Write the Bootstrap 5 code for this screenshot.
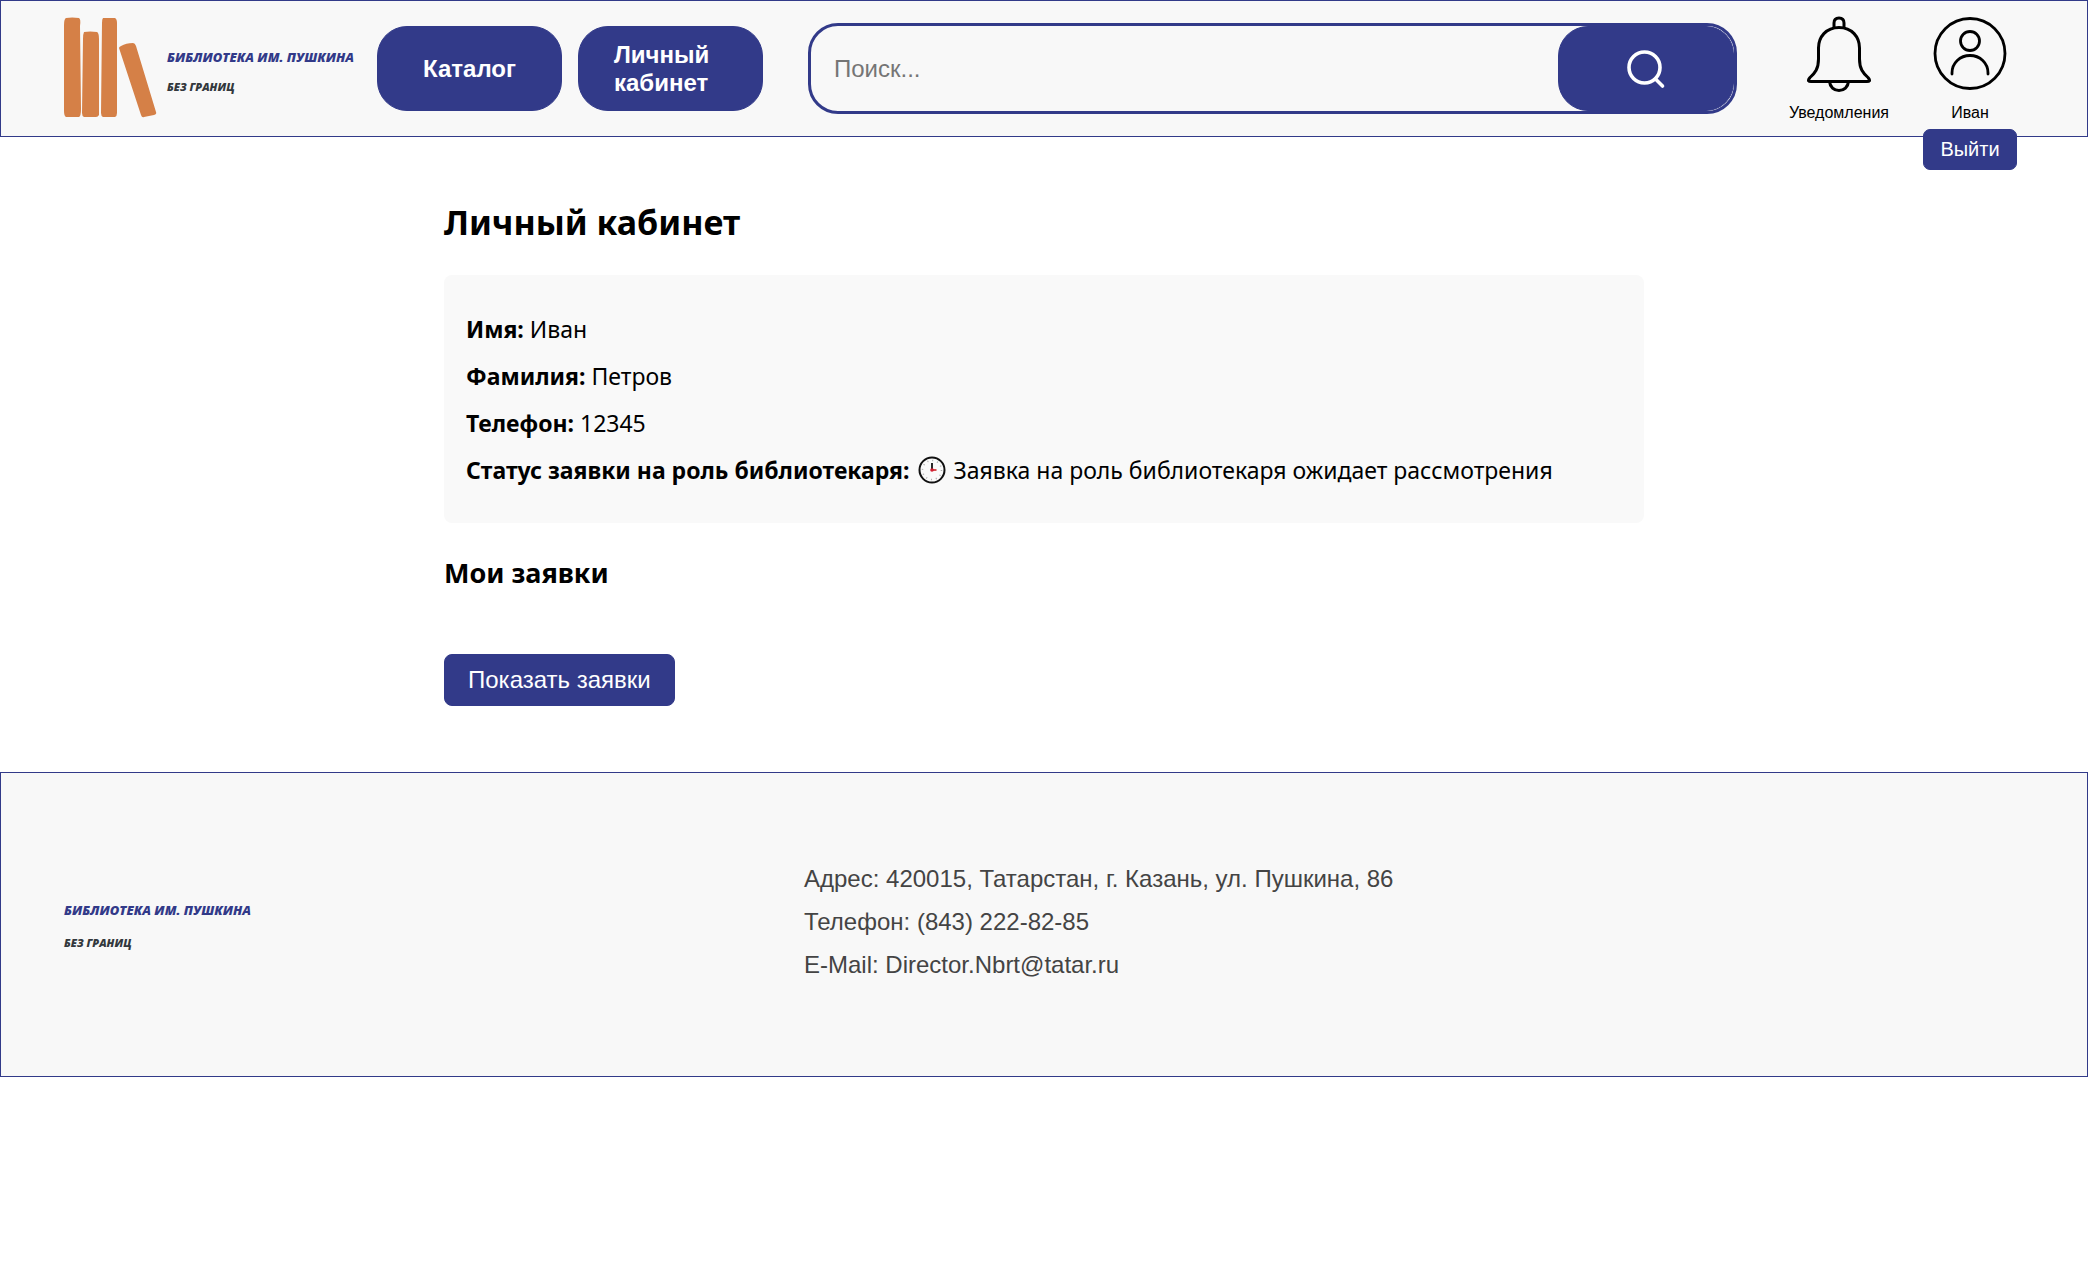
<!DOCTYPE html>
<html lang="ru">
<head>
<meta charset="utf-8">
<meta name="viewport" content="width=device-width, initial-scale=1">
<title>Личный кабинет</title>
<link href="https://cdn.jsdelivr.net/npm/bootstrap@5.3.0/dist/css/bootstrap.min.css" rel="stylesheet">
<style>
:root { --brand: #323a89; --panel: #f8f8f8; }
body { font-family: "Liberation Sans", Arial, sans-serif; font-size: 24px; color: #000; background: #fff; }
.site-header { background: var(--panel); border: 1px solid var(--brand); padding: 15px 70px 15px 63px; }
.logo-link { width: 297px; gap: 10px; color: var(--brand); }
.logo-link .logo-words { gap: 10px; padding-top: 6px; }
.logo-words { font-family: "Open Sans", "Noto Sans", sans-serif; font-style: italic; font-weight: 800; white-space: nowrap; }
.logo-title { font-size: 13px; line-height: 20px; color: var(--brand); }
.logo-sub { font-size: 11px; line-height: 20px; color: #33383d; }
.btn-brand { --bs-btn-color: #fff; --bs-btn-bg: var(--brand); --bs-btn-border-color: var(--brand); --bs-btn-hover-color: #fff; --bs-btn-hover-bg: #272e70; --bs-btn-hover-border-color: #272e70; --bs-btn-active-color: #fff; --bs-btn-active-bg: #272e70; }
.nav-pill { width: 185px; height: 85px; padding: 0 35px; border-radius: 30px; font-size: 24px; line-height: 28px; font-weight: 700; text-align: left; }
.search-box { height: 91px; border: 3px solid var(--brand); border-radius: 30px; overflow: hidden; margin: 0 50px 0 45px; }
.search-box .form-control { border: 0; background: transparent; font-size: 24px; padding: 0 23px; box-shadow: none; }
.search-box .form-control::placeholder { color: #757575; }
.search-btn { width: 176px; border-radius: 30px 28px 28px 30px; padding: 0; }
.head-action { color: #000; font-size: 16px; line-height: 16px; }
.head-action svg { margin-bottom: 13px; }
.notice-link { width: 104px; }
.user-zone { width: 94px; }
.logout-btn { top: 113px; height: 41px; padding: 0 0 2px; border-radius: 7px; font-size: 20px; line-height: 24px; }
.cabinet { max-width: 1200px; padding: 62px 0 66px; font-family: "Noto Sans", "Open Sans", sans-serif; }
.cabinet h1 { font-size: 34px; line-height: 46px; font-weight: 700; margin: 0 0 30px; }
.cabinet h2 { font-size: 27px; line-height: 36px; font-weight: 700; margin: 32px 0 63px; }
.profile-card { background: #f9f9f9; border-radius: 8px; padding: 38px 22px 37px; font-size: 23px; line-height: 32px; }
.profile-card p { margin-bottom: 15px; }
.show-btn { font-family: "Liberation Sans", Arial, sans-serif; font-size: 24px; line-height: 28px; padding: 11px 23px; border-radius: 8px; }
.site-footer { background: var(--panel); border: 1px solid var(--brand); padding: 92px 63px 97px; color: #444; }
.footer-brand { width: 740px; gap: 13px; padding-top: 35px; }
.contacts { font-size: 24px; line-height: 28px; gap: 15px; }
</style>
<script src="https://cdn.jsdelivr.net/npm/bootstrap@5.3.0/dist/js/bootstrap.bundle.min.js"></script>
</head>
<body>
<header class="site-header d-flex align-items-center">
  <a href="#" class="logo-link d-flex align-items-center text-decoration-none">
    <svg class="flex-shrink-0" width="93" height="103" viewBox="0 0 93 103" fill="#d58047" aria-hidden="true">
      <path d="M2 1Q8 0 15 1Q17 2 16 9L17 92Q17 99 15 100H2Q0 99 0 94V8Q0 2 2 1Z"/>
      <path d="M20 15Q26 14 33 15Q35 16 35 22V98Q34 100 32 100H20Q18 99 18 96L19 22Q19 17 20 15Z"/>
      <path d="M39 1H51Q53 2 53 6V96Q53 99 51 100H39Q37 99 37 96L38 6Q38 2 39 1Z"/>
      <path d="M57 29Q62 26 69 26Q71 26 72 29L92 95Q93 97 90 98L80 100Q78 101 77 98L55 31Q55 30 57 29Z"/>
    </svg>
    <span class="logo-words d-flex flex-column">
      <span class="logo-title">БИБЛИОТЕКА ИМ. ПУШКИНА</span>
      <span class="logo-sub">БЕЗ ГРАНИЦ</span>
    </span>
  </a>
  <nav class="d-flex gap-3 ms-3" aria-label="Основное меню">
    <a href="#" class="btn btn-brand nav-pill d-flex align-items-center justify-content-center">Каталог</a>
    <a href="#" class="btn btn-brand nav-pill d-flex align-items-center">Личный кабинет</a>
  </nav>
  <form class="search-box d-flex flex-grow-1" role="search">
    <input type="search" class="form-control" placeholder="Поиск..." aria-label="Поиск">
    <button type="button" class="btn btn-brand search-btn flex-shrink-0 d-flex align-items-center justify-content-center" aria-label="Найти">
      <svg width="40" height="40" viewBox="0 0 40 40" fill="none" stroke="#fff" stroke-width="3.600" stroke-linecap="round"><circle cx="18.500" cy="18.500" r="15.500"/><path d="M29.500 30L36.500 37"/></svg>
    </button>
  </form>
  <a href="#" class="head-action notice-link d-flex flex-column align-items-center text-decoration-none me-4">
    <svg width="64" height="76" viewBox="0 0 64 76" fill="none" stroke="#000" stroke-width="3" stroke-linejoin="round" aria-hidden="true">
      <path d="M27 12V7Q27 2 32 2T37 7V12"/>
      <path d="M32 11.500C19 11.500 11.500 21 11.500 32V43C11.500 53 8 57 3 61.500C0 65 2 65.500 4 65.500H60C62 65.500 64 65 61 61.500C56 57 52.500 53 52.500 43V32C52.500 21 45 11.500 32 11.500Z"/>
      <path d="M22.500 65.500C23 71 27 74.500 32 74.500S41 71 41.500 65.500"/>
    </svg>
    Уведомления
  </a>
  <div class="user-zone position-relative ms-2">
    <a href="#" class="head-action d-flex flex-column align-items-center text-decoration-none">
      <svg width="74" height="76" viewBox="0 0 74 76" fill="none" stroke="#000" stroke-width="2.800" stroke-linecap="round" aria-hidden="true">
        <circle cx="37" cy="37.500" r="35"/><circle cx="37" cy="25" r="9.500"/><path d="M19 58V57C19 47 27 39.500 37 39.500S55 47 55 57V58"/>
      </svg>
      Иван
    </a>
    <button type="button" class="btn btn-brand logout-btn position-absolute start-0 w-100">Выйти</button>
  </div>
</header>

<main class="cabinet mx-auto">
  <h1>Личный кабинет</h1>
  <section class="profile-card">
    <p><strong>Имя:</strong> Иван</p>
    <p><strong>Фамилия:</strong> Петров</p>
    <p><strong>Телефон:</strong> 12345</p>
    <p class="d-flex align-items-center gap-2 mb-0"><strong>Статус заявки на роль библиотекаря:</strong>
      <svg width="28" height="28" viewBox="0 0 28 28" aria-hidden="true"><circle cx="14" cy="14" r="12.500" fill="#fafafa" stroke="#111" stroke-width="2"/><circle cx="14" cy="14" r="9.500" fill="none" stroke="#aaa" stroke-width="1.500" stroke-dasharray="1 3.970"/><path d="M14 14V7" stroke="#111" stroke-width="1.800"/><path d="M14 14H18.500" stroke="#c22" stroke-width="1.600"/><circle cx="14" cy="14" r="1.800" fill="#d21e32"/></svg>
      <span>Заявка на роль библиотекаря ожидает рассмотрения</span></p>
  </section>
  <h2>Мои заявки</h2>
  <button type="button" class="btn btn-brand show-btn">Показать заявки</button>
</main>

<footer class="site-footer d-flex">
  <div class="footer-brand logo-words d-flex flex-column">
    <span class="logo-title">БИБЛИОТЕКА ИМ. ПУШКИНА</span>
    <span class="logo-sub">БЕЗ ГРАНИЦ</span>
  </div>
  <address class="contacts d-flex flex-column mb-0">
    <span>Адрес: 420015, Татарстан, г. Казань, ул. Пушкина, 86</span>
    <span>Телефон: (843) 222-82-85</span>
    <span>E-Mail: Director.Nbrt@tatar.ru</span>
  </address>
</footer>
</body>
</html>
